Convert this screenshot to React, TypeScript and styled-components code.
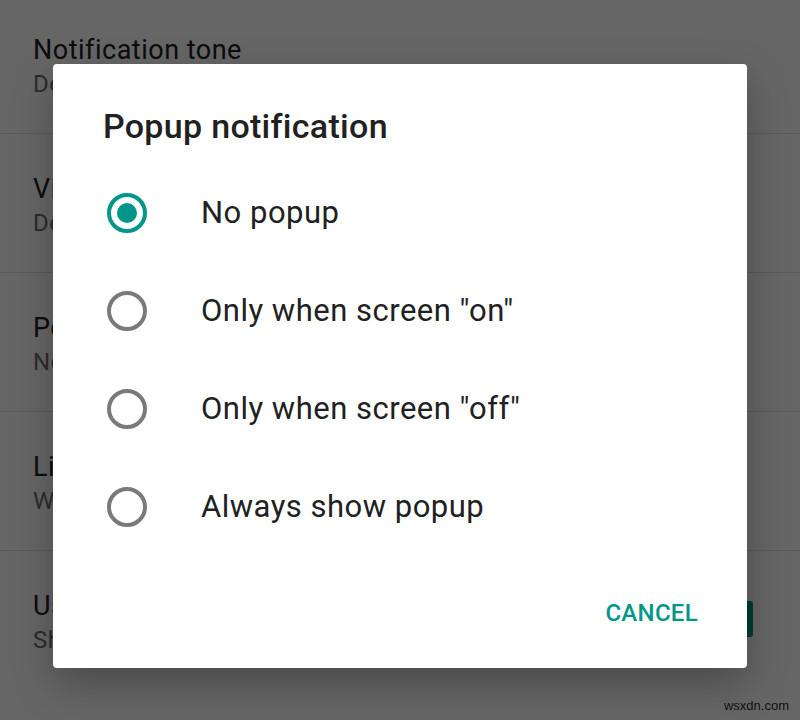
import React from "react";
import styled, { createGlobalStyle } from "styled-components";

const Global = createGlobalStyle`
html, body {
    margin: 0;
    padding: 0;
    background: #fff;
    font-family: Roboto, "Noto Sans", "Liberation Sans", sans-serif;
    overflow: hidden;
}
`;

const Page = styled.div`
position: relative;
width: 800px;
height: 720px;
overflow: hidden;
background: #fff;
`;

const List = styled.div`
margin-top: -5px;
`;

const Row = styled.div`
display: flex;
align-items: center;
padding: 40px 47px 34px 33px;
border-bottom: 1px solid #e0e0e0;
&:last-child {
    border-bottom: none;
}
`;

const RowText = styled.div`
flex: 1;
min-width: 0;
`;

const RowTitle = styled.div`
font-size: 27px;
line-height: 30px;
letter-spacing: 0.5px;
color: #212121;
white-space: nowrap;
`;

const RowSub = styled.div`
margin-top: 4px;
font-size: 24px;
line-height: 30px;
letter-spacing: 0.4px;
color: #6f6f6f;
white-space: nowrap;
`;

const Check = styled.div`
width: 36px;
height: 36px;
border-radius: 3px;
background: #009688;
display: flex;
align-items: center;
justify-content: center;
flex-shrink: 0;
margin-bottom: 8px;
`;

const Scrim = styled.div`
position: absolute;
inset: 0;
background: rgba(0, 0, 0, 0.6);
display: flex;
justify-content: center;
align-items: flex-start;
padding-top: 64px;
`;

const Dialog = styled.div`
width: 694px;
height: 604px;
box-sizing: border-box;
background: #fff;
border-radius: 4px;
box-shadow: 0 16px 40px rgba(0, 0, 0, 0.28);
padding: 42px 49px 33px 0;
display: flex;
flex-direction: column;
`;

const Title = styled.div`
padding-left: 50px;
font-size: 34px;
line-height: 40px;
font-weight: 500;
letter-spacing: 0.3px;
color: #212121;
margin-bottom: 18px;
`;

const Option = styled.div`
display: flex;
align-items: center;
height: 98px;
padding-left: 54px;
`;

const Radio = styled.div<{ $on?: boolean }>`
width: 40px;
height: 40px;
box-sizing: border-box;
border-radius: 50%;
border: 4px solid ${p => p.$on ? "#009688" : "#7a7a7a"};
display: flex;
align-items: center;
justify-content: center;
flex-shrink: 0;
&::after {
    content: "";
    display: ${p => p.$on ? "block" : "none"};
    width: 20px;
    height: 20px;
    border-radius: 50%;
    background: #009688;
}
`;

const Label = styled.div`
margin-left: 54px;
font-size: 31px;
line-height: 36px;
letter-spacing: 0.5px;
color: #212121;
`;

const Actions = styled.div`
margin-top: auto;
display: flex;
justify-content: flex-end;
`;

const Btn = styled.div`
font-size: 24px;
line-height: 44px;
font-weight: 500;
color: #009688;
letter-spacing: 0.3px;
`;

const Mark = styled.div`
position: absolute;
right: 11px;
bottom: 7px;
font-family: "Liberation Sans", Arial, sans-serif;
font-size: 13px;
color: #111;
`;

const rows = [
    { title: "Notification tone", sub: "Default (Whistle)" },
    { title: "Vibrate", sub: "Default" },
    { title: "Popup notification", sub: "No popup" },
    { title: "Light", sub: "White" },
    { title: "Use high priority notifications", sub: "Show previews of notifications at the top", check: true },
];

const options = ["No popup", "Only when screen \"on\"", "Only when screen \"off\"", "Always show popup"];

export default function App() {
    return <Page>
        <Global />
        <List>
            { rows.map(r => <Row key={ r.title }>
                <RowText>
                    <RowTitle>{ r.title }</RowTitle>
                    <RowSub>{ r.sub }</RowSub>
                </RowText>
                { r.check && <Check>
                    <svg width="28" height="28" viewBox="0 0 24 24">
                        <path d="M5 12.5l4.5 4.5L19 7.5" fill="none" stroke="#fff" strokeWidth="2.6" />
                    </svg>
                </Check> }
            </Row>) }
        </List>
        <Scrim>
            <Dialog>
                <Title>Popup notification</Title>
                { options.map((o, i) => <Option key={ o }>
                    <Radio $on={ i === 0 } />
                    <Label>{ o }</Label>
                </Option>) }
                <Actions>
                    <Btn>CANCEL</Btn>
                </Actions>
            </Dialog>
        </Scrim>
        <Mark>wsxdn.com</Mark>
    </Page>;
}
